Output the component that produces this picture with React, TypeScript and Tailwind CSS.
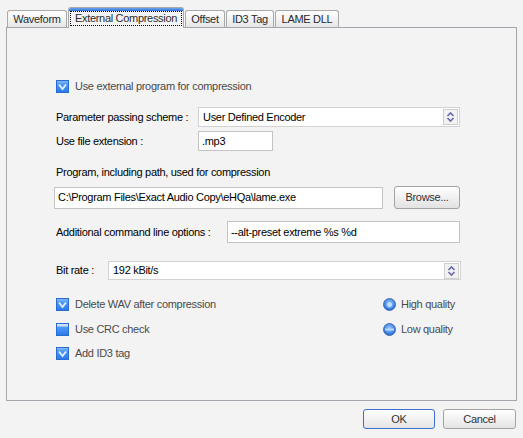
import React from 'react';

const FONT = { fontFamily: '"Liberation Sans", Arial, sans-serif' };

function CheckBox({ checked }: { checked: boolean }) {
  return (
    <svg width="13" height="13" viewBox="0 0 13 13" className="shrink-0">
      <defs>
        <linearGradient id={checked ? 'cbOn' : 'cbOff'} x1="0" y1="0" x2="0" y2="1">
          <stop offset="0" stopColor="#8cc0ff" />
          <stop offset="0.3" stopColor="#4e9af8" />
          <stop offset="1" stopColor="#2a78ea" />
        </linearGradient>
      </defs>
      <rect x="0.5" y="0.5" width="12" height="12" fill={`url(#${checked ? 'cbOn' : 'cbOff'})`} stroke="#2a6bd0" />
      {checked ? (
        <path d="M3 4.5 L6.5 9 L10 4.5" fill="none" stroke="#e6f1ff" strokeWidth="1.8" />
      ) : (
        <rect x="1" y="1" width="11" height="2.5" fill="#c9e2ff" />
      )}
    </svg>
  );
}

function Radio({ checked }: { checked: boolean }) {
  const id = checked ? 'rdOn' : 'rdOff';
  return (
    <svg width="13" height="13" viewBox="0 0 13 13" className="shrink-0">
      <defs>
        <radialGradient id={id} cx="0.5" cy="0.4" r="0.6">
          <stop offset="0" stopColor="#9fcbff" />
          <stop offset="1" stopColor="#1f66d6" />
        </radialGradient>
      </defs>
      <circle cx="6.5" cy="6.5" r="6" fill={`url(#${id})`} stroke="#2b5ea8" strokeWidth="0.8" />
      {checked ? (
        <circle cx="6.5" cy="6.5" r="3" fill="#bfe0ff" stroke="#5aa0f0" strokeWidth="0.8" />
      ) : (
        <rect x="2" y="5.5" width="9" height="2" fill="#b8d8ff" />
      )}
    </svg>
  );
}

function Spinner() {
  return (
    <div className="flex h-[16px] w-[15px] items-center justify-center border border-[#cfcfcf] bg-[#f2f2f2]">
      <svg width="9" height="12" viewBox="0 0 9 12">
        <path d="M1.5 5 L4.5 2 L7.5 5" fill="none" stroke="#6a68a8" strokeWidth="1.6" />
        <path d="M1.5 7 L4.5 10 L7.5 7" fill="none" stroke="#6a68a8" strokeWidth="1.6" />
      </svg>
    </div>
  );
}

function Select({ value, width, height }: { value: string; width: string; height: string }) {
  return (
    <div className={`flex items-center justify-between border border-[#d2d2d2] bg-white pl-[4px] pr-[1px] ${width} ${height}`}>
      <span className="text-[11px] text-black">{value}</span>
      <Spinner />
    </div>
  );
}

function Field({ value, className }: { value: string; className: string }) {
  return (
    <div className={`flex items-center border border-[#c4c4c4] bg-white pl-[3px] text-[11px] text-black ${className}`}>
      {value}
    </div>
  );
}

function Tab({ label, width }: { label: string; width: string }) {
  return (
    <div
      className={`flex h-[17px] items-center justify-center rounded-t-[3px] border border-b-0 border-[#a9a9a9] bg-gradient-to-b from-white to-[#e6e6e6] text-[11px] text-[#2a2a2a] ${width}`}
    >
      {label}
    </div>
  );
}

export default function App() {
  return (
    <div className="h-[438px] w-[523px] overflow-hidden bg-[#f3f3f3] px-[6px] pt-[7px] tracking-[-0.3px]" style={FONT}>
      <div className="flex h-[20px] items-end gap-[1px] pl-[1px]">
        <Tab label="Waveform" width="w-[60px]" />
        <div className="relative z-10 mb-[-1px] flex h-[21px] w-[116px] flex-col rounded-t-[3px] border border-b-0 border-[#a9a9a9] bg-[#f3f3f3]">
          <div className="h-[3px] rounded-t-[2px] bg-gradient-to-b from-[#6aa4f0] to-[#2f6fd8]" />
          <div className="mx-[1px] flex h-[15px] items-center justify-center border border-dotted border-black text-[11px] text-[#2a2a2a]">
            External Compression
          </div>
        </div>
        <Tab label="Offset" width="w-[40px]" />
        <Tab label="ID3 Tag" width="w-[48px]" />
        <Tab label="LAME DLL" width="w-[64px]" />
      </div>

      <div className="flex h-[374px] flex-col border border-[#a5a5ad] pl-[47px] text-[11px] text-black">
        <div className="ml-[2px] mt-[51px] flex h-[14px] items-center gap-[6px] text-[#4a4a4a]">
          <CheckBox checked />
          <span>Use external program for compression</span>
        </div>

        <div className="mt-[14px] flex h-[20px] items-center">
          <span className="w-[144px] pl-[2px]">Parameter passing scheme :</span>
          <Select value="User Defined Encoder" width="w-[262px]" height="h-[20px]" />
        </div>

        <div className="mt-[4px] flex h-[20px] items-center">
          <span className="w-[144px] pl-[2px]">Use file extension :</span>
          <Field value=".mp3" className="h-[20px] w-[75px]" />
        </div>

        <div className="mt-[14px] flex h-[14px] items-center pl-[2px]">
          Program, including path, used for compression
        </div>

        <div className="mt-[7px] flex h-[23px] items-center gap-[11px]">
          <Field value="C:\Program Files\Exact Audio Copy\eHQa\lame.exe" className="h-[22px] w-[329px]" />
          <div className="flex h-[23px] w-[66px] items-center justify-center rounded-[3px] border border-[#a3a3a3] bg-gradient-to-b from-white to-[#e2e2e2] text-[#333]">
            Browse...
          </div>
        </div>

        <div className="mt-[12px] flex h-[22px] items-center">
          <span className="w-[173px] pl-[2px]">Additional command line options :</span>
          <Field value="--alt-preset extreme %s %d" className="h-[22px] w-[233px]" />
        </div>

        <div className="mt-[18px] flex h-[19px] items-center">
          <span className="w-[54px] pl-[2px]">Bit rate :</span>
          <Select value="192 kBit/s" width="w-[353px]" height="h-[19px]" />
        </div>

        <div className="mt-[17px] flex h-[14px] items-center text-[#4a4a4a]">
          <div className="ml-[2px] flex w-[327px] items-center gap-[6px]">
            <CheckBox checked />
            <span>Delete WAV after compression</span>
          </div>
          <div className="flex items-center gap-[5px]">
            <Radio checked />
            <span>High quality</span>
          </div>
        </div>

        <div className="mt-[11px] flex h-[14px] items-center text-[#4a4a4a]">
          <div className="ml-[2px] flex w-[327px] items-center gap-[6px]">
            <CheckBox checked={false} />
            <span>Use CRC check</span>
          </div>
          <div className="flex items-center gap-[5px]">
            <Radio checked={false} />
            <span>Low quality</span>
          </div>
        </div>

        <div className="ml-[2px] mt-[10px] flex h-[14px] items-center gap-[6px] text-[#4a4a4a]">
          <CheckBox checked />
          <span>Add ID3 tag</span>
        </div>
      </div>

      <div className="mt-[8px] flex justify-end gap-[8px] pr-[1px] text-[11px]">
        <div className="flex h-[20px] w-[72px] items-center justify-center rounded-[3px] border border-[#3c6fd0] bg-gradient-to-b from-white to-[#e4e4e4] text-[#333]">
          OK
        </div>
        <div className="flex h-[20px] w-[73px] items-center justify-center rounded-[3px] border border-[#a3a3a3] bg-gradient-to-b from-white to-[#e4e4e4] text-[#333]">
          Cancel
        </div>
      </div>
    </div>
  );
}
